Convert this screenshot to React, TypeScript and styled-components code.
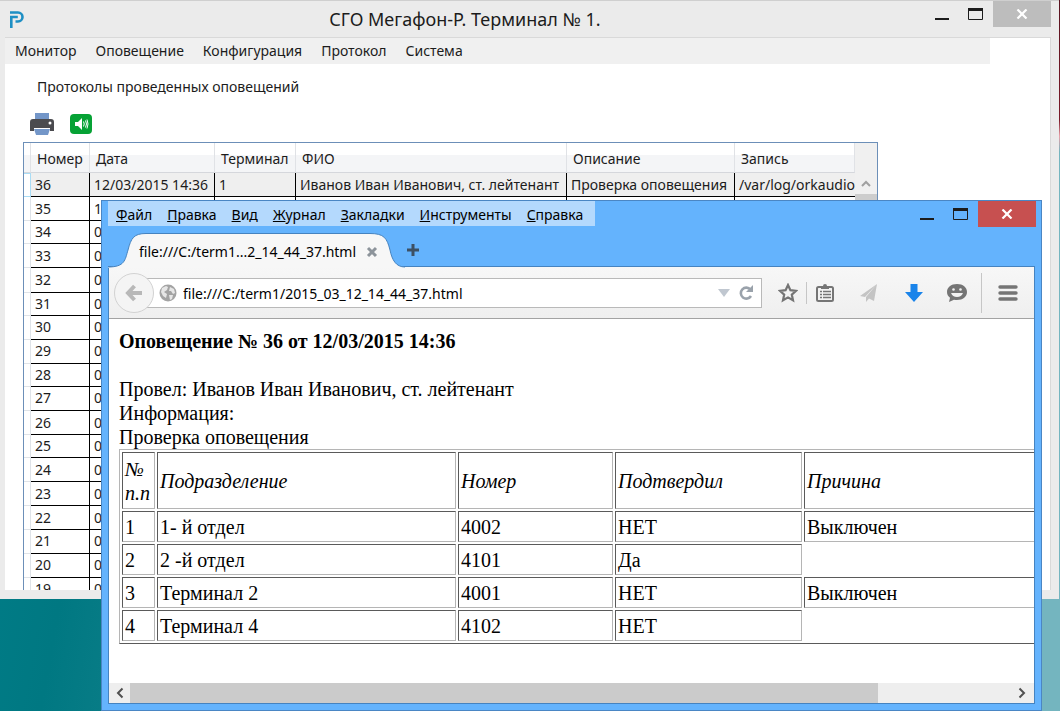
import React from 'react';
import styled, { createGlobalStyle, css } from 'styled-components';

const GlobalStyle = createGlobalStyle`
  * { box-sizing: border-box; }
  html, body, #root { height: 100%; margin: 0; }
  body { overflow: hidden; }
  button { border: 0; padding: 0; margin: 0; background: none; font: inherit; color: inherit; }
`;

const uiFont = '"Noto Sans", "Open Sans", sans-serif';

const Desktop = styled.main`
  position: relative;
  height: 100vh;
  overflow: hidden;
  font-family: ${uiFont};
  color: #1c1c1c;
  background:
    linear-gradient(#5a1420 0, #7a1a28 120px, #e8a0a8 136px, rgba(116, 181, 191, 0) 152px) right top / 6px 152px no-repeat,
    linear-gradient(100deg, #00808b 0, #007882 14%, #74b5bf 92%, #74b5bf 100%);
`;

/* Window chrome */

const AppWindow = styled.section`
  position: absolute;
  top: 0;
  left: 0;
  right: 1px;
  height: 599px;
  display: flex;
  flex-direction: column;
  padding: 0 8px 9px 5px;
  background: #ebebeb;
  border-top: 1px solid #cfcfcf;
`;

const BrowserWindow = styled.section`
  position: absolute;
  top: 200px;
  left: 101px;
  right: 18px;
  bottom: 0;
  display: flex;
  flex-direction: column;
  padding: 0 6px;
  padding-bottom: 6px;
  background: #64b3fd;
  border: 1px solid #4a86c4;
`;

const TitleBar = styled.header`
  display: flex;
  align-items: flex-start;
  height: 36px;
  flex: none;
`;

const AppIcon = styled.svg`
  width: 16px;
  height: 20px;
  margin: 9px 0 0 4px;
  flex: none;
`;

const Title = styled.h1`
  flex: 1;
  margin: 0;
  padding-right: 20px;
  text-align: center;
  font-size: 18px;
  font-weight: 400;
  line-height: 36px;
`;

const WindowControls = styled.div`
  display: flex;
  margin-left: auto;
  flex: none;
`;

const ControlButton = styled.button<{ $close?: string }>`
  width: ${(p) => (p.$close ? 58 : 34)}px;
  height: 26px;
  background: ${(p) => p.$close || 'transparent'};
  svg { display: block; margin: auto; }
`;

function Controls({ close }: { close: string }) {
  return (
    <WindowControls>
      <ControlButton aria-label="Свернуть">
        <svg width="16" height="14"><path d="M1 12h14" stroke="#1c1c1c" strokeWidth="2" /></svg>
      </ControlButton>
      <ControlButton aria-label="Развернуть">
        <svg width="16" height="14"><path d="M.5 1.5h14v11H.5z" fill="none" stroke="#1c1c1c" /><path d="M0 2.500h15" stroke="#1c1c1c" strokeWidth="3" /></svg>
      </ControlButton>
      <ControlButton aria-label="Закрыть" $close={close}>
        <svg width="12" height="10"><path d="M1.5 0.5l9 9M10.500 .5l-9 9" stroke="#fff" strokeWidth="2.200" /></svg>
      </ControlButton>
    </WindowControls>
  );
}

/* Terminal application */

const Client = styled.div`
  flex: 1;
  min-height: 0;
  overflow: hidden;
  background: #fff;
  border: solid #d9d9d9;
  border-width: 1px 1px 0 0;
`;

const MainMenu = styled.nav`
  display: flex;
  gap: 19px;
  height: 26px;
  margin-right: 60px;
  padding-left: 10px;
  background: #f0f0f0;
  font-size: 14px;
  line-height: 24px;
`;

const PageTitle = styled.h2`
  margin: 13px 0 0 32px;
  font-size: 14px;
  font-weight: 400;
  line-height: 20px;
`;

const ActionBar = styled.div`
  display: flex;
  align-items: center;
  gap: 14px;
  height: 24px;
  margin: 15px 0 6px 24px;
  svg { display: block; }
`;

const GridBox = styled.div`
  display: flex;
  width: 855px;
  height: 460px;
  margin-left: 18px;
  overflow: hidden;
  border: 1px solid #6c8fb8;
`;

const ProtocolTable = styled.table`
  width: 831px;
  flex: none;
  table-layout: fixed;
  border-collapse: separate;
  border-spacing: 0;
  font-size: 14px;
  line-height: 20px;
`;

const HeadCell = styled.th`
  height: 30px;
  padding: 2px 0 0 6px;
  overflow: hidden;
  white-space: nowrap;
  text-align: left;
  font-weight: 400;
  background: linear-gradient(#fff 40%, #f4f5f7 42%, #f4f5f7);
  border-right: 1px solid #e0e2e6;
  border-bottom: 1px solid #d5d7dc;
`;

const ProtocolRow = styled.tr<{ $selected?: boolean }>`
  height: 24px;
  background: ${(p) => (p.$selected ? '#efefef' : '#fff')};
  &:nth-child(3n) { height: 23px; }
`;

const ProtocolCell = styled.td`
  padding: 0 0 0 4px;
  overflow: hidden;
  white-space: nowrap;
  border-right: 1px solid #000;
  border-bottom: 1px solid #000;
  line-height: 20px;
  &:last-child { border-right: 0; }
`;

const RowMarker = styled.td<{ $selected?: boolean }>`
  padding: 0;
  background: #fff;
  border: 1px solid ${(p) => (p.$selected ? '#a9dcf5' : '#dfe3e8')};
  border-top-width: ${(p) => (p.$selected ? 1 : 0)}px;
  border-left: 0;
`;

const VerticalScroll = styled.div`
  flex: 1;
  padding-top: 31px;
  background: #f0f0f0;
`;

const ScrollUp = styled.button`
  display: block;
  width: 100%;
  height: 20px;
  svg { display: block; margin: auto; }
`;

const VerticalThumb = styled.div`
  height: 200px;
  background: #cdcdcd;
`;

/* Browser */

const BrowserTop = styled.div`
  display: flex;
  height: 32px;
  margin-right: -1px;
  flex: none;
`;

const BrowserMenu = styled.nav`
  display: flex;
  gap: 15px;
  height: 25px;
  padding: 0 12px 0 8px;
  background: #b4d9fd;
  color: #000;
  font-size: 14px;
  line-height: 27px;
`;

const AccessKey = styled.span`
  text-decoration: underline;
`;

const TabStrip = styled.div`
  display: flex;
  height: 34px;
  flex: none;
  border-bottom: 1px solid #4583c0;
`;

const Tab = styled.div`
  position: relative;
  display: flex;
  align-items: center;
  justify-content: space-between;
  width: 297px;
  height: 35px;
  padding: 2px 27px 0 31px;
  color: #000;
  font-size: 14px;
`;

const TabShape = styled.svg`
  position: absolute;
  left: 0;
  top: 0;
`;

const TabTitle = styled.span`
  position: relative;
  white-space: nowrap;
`;

const IconButton = styled.button<{ $width?: number }>`
  position: relative;
  display: flex;
  align-items: center;
  justify-content: center;
  flex: none;
  width: ${(p) => p.$width || 16}px;
`;

const BrowserBody = styled.div`
  flex: 1;
  min-height: 0;
  display: flex;
  flex-direction: column;
  background: #fff;
  border: solid #4583c0;
  border-width: 0 1px 1px;
`;

const NavBar = styled.div`
  display: flex;
  align-items: center;
  height: 52px;
  flex: none;
  padding-left: 5px;
  background: linear-gradient(#f7f7f7, #efefef);
  border-bottom: 1px solid #a3a3a3;
`;

const BackButton = styled(IconButton)`
  width: 40px;
  height: 40px;
  border: 1px solid #d2d2d2;
  border-radius: 50%;
  background: #f4f4f4;
`;

const AddressBar = styled.div`
  display: flex;
  align-items: center;
  flex: 1;
  height: 30px;
  margin-left: -8px;
  padding: 0 7px 0 13px;
  gap: 6px;
  background: #fff;
  border: 1px solid #b9b9b9;
  border-left: 0;
`;

const AddressInput = styled.input`
  flex: 1;
  min-width: 0;
  height: 28px;
  padding: 2px 0 0;
  border: 0;
  outline: 0;
  background: transparent;
  color: #000;
  font: 14px ${uiFont};
`;

const Tools = styled.div`
  display: flex;
  align-items: center;
  padding-left: 8px;
`;

const Divider = styled.i<{ $height: number }>`
  width: 1px;
  height: ${(p) => p.$height}px;
  background: #c6c6c6;
`;

const Document = styled.article`
  flex: 1;
  min-height: 0;
  overflow: hidden;
  padding: 10px 0 0 10px;
  color: #000;
  font: 20px/24px "Liberation Serif", serif;
`;

const DocHeading = styled.h1`
  margin: 0 0 24px;
  font-size: 20px;
  line-height: 24px;
`;

const DocLine = styled.p`
  margin: 0;
`;

const ReportTable = styled.table`
  width: 1238px;
  table-layout: fixed;
  border-collapse: separate;
  border-spacing: 2px;
  border: 1px solid;
  border-color: #b5b5b5 #5a5a5a #5a5a5a #b5b5b5;
`;

const reportCell = css`
  padding: 0 2px;
  border: 1px solid;
  border-color: #5a5a5a #b5b5b5 #b5b5b5 #5a5a5a;
  text-align: left;
`;

const ReportHead = styled.th`
  ${reportCell}
  height: 57px;
  font-weight: 400;
  font-style: italic;
`;

const ReportCell = styled.td`
  ${reportCell}
  height: 31px;
`;

const HorizontalScroll = styled.div`
  display: flex;
  height: 20px;
  flex: none;
  background: #eee;
`;

const HorizontalTrack = styled.div`
  flex: 1;
  div { width: 85%; height: 100%; background: #cbcbcb; }
`;

const protocols = Array.from({ length: 18 }, (_, i) => 36 - i);
const protocolColumns = ['Номер', 'Дата', 'Терминал', 'ФИО', 'Описание', 'Запись'];
const selectedRecord = ['12/03/2015 14:36', '1', 'Иванов Иван Иванович, ст. лейтенант', 'Проверка оповещения', '/var/log/orkaudio'];
const browserMenu = ['Файл', 'Правка', 'Вид', 'Журнал', 'Закладки', 'Инструменты', 'Справка'];
const report = [
  ['1', '1- й отдел', '4002', 'НЕТ', 'Выключен'],
  ['2', '2 -й отдел', '4101', 'Да'],
  ['3', 'Терминал 2', '4001', 'НЕТ', 'Выключен'],
  ['4', 'Терминал 4', '4102', 'НЕТ'],
];

function TerminalApp() {
  return (
    <AppWindow>
      <TitleBar>
        <AppIcon viewBox="0 0 16 20">
          <path d="M1 2.500h8a4.500 4.500 0 0 1 0 9H6.500" fill="none" stroke="#1e8fc4" strokeWidth="2.600" />
          <path d="M2.300 18V7h6.500" fill="none" stroke="#1e8fc4" strokeWidth="2.600" />
        </AppIcon>
        <Title>СГО Мегафон-Р. Терминал № 1.</Title>
        <Controls close="#bdbdbd" />
      </TitleBar>
      <Client>
        <MainMenu>
          {['Монитор', 'Оповещение', 'Конфигурация', 'Протокол', 'Система'].map((m) => (
            <button key={m}>{m}</button>
          ))}
        </MainMenu>
        <PageTitle>Протоколы проведенных оповещений</PageTitle>
        <ActionBar>
          <button aria-label="Печать">
            <svg width="27" height="24">
              <path d="M6 1h14v6H6z" fill="#7396c8" />
              <path d="M4 7h18a3 3 0 0 1 3 3v9h-4v-3H5v3H1v-9a3 3 0 0 1 3-3z" fill="#4b4b4f" />
              <path d="M5 17h16l-2 6H7z" fill="#7396c8" />
              <circle cx="21" cy="11" r="1.500" fill="#fff" />
            </svg>
          </button>
          <button aria-label="Прослушать">
            <svg width="22" height="22">
              <rect y="1" width="22" height="20" rx="4" fill="#06a235" />
              <path d="M5 9h3l4-4v12l-4-4H5z" fill="#fff" />
              <path d="M13.500 8.500q1.500 2.500 0 5M15.500 7.500q2 3.500 0 7M17 6.500q2 4.500 0 9" fill="none" stroke="#fff" />
            </svg>
          </button>
        </ActionBar>
        <GridBox>
          <ProtocolTable>
            <colgroup>
              {[7, 59, 125, 81, 271, 168, 120].map((w, i) => <col key={i} width={w} />)}
            </colgroup>
            <thead>
              <tr>
                <HeadCell aria-label="Строка" />
                {protocolColumns.map((c) => <HeadCell key={c}>{c}</HeadCell>)}
              </tr>
            </thead>
            <tbody>
              {protocols.map((n) => {
                const selected = n === 36;
                const values = selected ? selectedRecord : [n === 35 ? '1' : '0', '', '', '', ''];
                return (
                  <ProtocolRow key={n} $selected={selected}>
                    <RowMarker $selected={selected} />
                    <ProtocolCell>{n}</ProtocolCell>
                    {values.map((v, i) => <ProtocolCell key={i}>{v}</ProtocolCell>)}
                  </ProtocolRow>
                );
              })}
            </tbody>
          </ProtocolTable>
          <VerticalScroll>
            <ScrollUp aria-label="Вверх">
              <svg width="10" height="8"><path d="M1 6l4-4 4 4" fill="none" stroke="#a0a0a0" strokeWidth="2" /></svg>
            </ScrollUp>
            <VerticalThumb />
          </VerticalScroll>
        </GridBox>
      </Client>
    </AppWindow>
  );
}

function NavigationBar() {
  return (
    <NavBar>
      <BackButton aria-label="Назад">
        <svg width="18" height="18"><path d="M9.500 2L3 9l6.500 7M3.500 9H17" fill="none" stroke="#b8b8b8" strokeWidth="4" /></svg>
      </BackButton>
      <AddressBar>
        <svg width="18" height="18">
          <circle cx="9" cy="9" r="8.500" fill="#a3a3a3" />
          <path d="M3 4l4-2 2 1-1 3-3 2 3 2-1 4-3-2-2-4zM11 3l4 2 1 4-2 1-2-3-2 0zM10 11l4 0-1 4-2 1z" fill="#e6e6e6" />
        </svg>
        <AddressInput aria-label="Адрес" defaultValue="file:///C:/term1/2015_03_12_14_44_37.html" />
        <IconButton aria-label="Журнал адресов">
          <svg width="14" height="10"><path d="M1 1h12L7 9z" fill="#c0c7d0" /></svg>
        </IconButton>
        <IconButton aria-label="Обновить">
          <svg width="16" height="16">
            <path d="M12.500 4.500A5.500 5.500 0 1 0 13 11" fill="none" stroke="#9aa2ab" strokeWidth="2.600" />
            <path d="M15 0v7H8z" fill="#9aa2ab" />
          </svg>
        </IconButton>
      </AddressBar>
      <Tools>
        <IconButton $width={36} aria-label="В закладки">
          <svg width="20" height="20"><path d="M10 2l2.400 5.200 5.600.6-4.200 3.800 1.200 5.700L10 14.400l-5 2.900 1.200-5.700L2 7.800l5.600-.6z" fill="none" stroke="#757575" strokeWidth="2.200" /></svg>
        </IconButton>
        <Divider $height={22} />
        <IconButton $width={36} aria-label="Закладки">
          <svg width="18" height="20">
            <rect x="1" y="4" width="16" height="14" rx="1.500" fill="none" stroke="#757575" strokeWidth="2" />
            <path d="M5 3h2q0-2 2-2t2 2h2v3H5z" fill="#757575" />
            <path d="M4 8.500h2M7 8.500h8M4 11.500h2M7 11.500h8M4 14.500h2M7 14.500h8" stroke="#757575" strokeWidth="1.600" />
          </svg>
        </IconButton>
        <IconButton $width={52} aria-label="Отправить">
          <svg width="20" height="20"><path d="M18 1L1 13l5 1zM18 1L7 14v5l3-3.500 5 2.500z" fill="#c4c4c4" /></svg>
        </IconButton>
        <IconButton $width={38} aria-label="Загрузки">
          <svg width="18" height="20"><path d="M5.500 1h7v8H18l-9 10L0 9h5.500z" fill="#1a84ea" /></svg>
        </IconButton>
        <IconButton $width={48} aria-label="Чат">
          <svg width="22" height="20">
            <path d="M11 1c6 0 10 3.400 10 8s-4 8-10 8c-1 0-2 0-3-.3L3 19l1-4.300C2 13.300 1 11.300 1 9c0-4.600 4-8 10-8z" fill="#757575" />
            <circle cx="7.500" cy="6.500" r="1.300" fill="#f2f2f2" /><circle cx="14.500" cy="6.500" r="1.300" fill="#f2f2f2" />
            <path d="M5 10h12q-1.500 4-6 4T5 10z" fill="#f2f2f2" />
          </svg>
        </IconButton>
        <Divider $height={40} />
        <IconButton $width={52} aria-label="Меню">
          <svg width="20" height="18"><path d="M2 3h16M2 9h16M2 15h16" stroke="#757575" strokeWidth="3.400" strokeLinecap="round" /></svg>
        </IconButton>
      </Tools>
    </NavBar>
  );
}

function Browser() {
  return (
    <BrowserWindow>
      <BrowserTop>
        <BrowserMenu>
          {browserMenu.map((m) => (
            <button key={m}><AccessKey>{m[0]}</AccessKey>{m.slice(1)}</button>
          ))}
        </BrowserMenu>
        <Controls close="#c75050" />
      </BrowserTop>
      <TabStrip>
        <Tab>
          <TabShape width="297" height="35">
            <path d="M0 34C17 34 17 27 20 17C23 5 26 .5 38 .5H262C276 .5 279 5 282 17C284 27 288 34 297 34V35H0z" fill="#f7f7f7" />
            <path d="M0 34C17 34 17 27 20 17C23 5 26 .5 38 .5H262C276 .5 279 5 282 17C284 27 288 34 297 34" fill="none" stroke="#4583c0" />
          </TabShape>
          <TabTitle>file:///C:/term1...2_14_44_37.html</TabTitle>
          <IconButton aria-label="Закрыть вкладку" $width={12}>
            <svg width="12" height="12"><path d="M2 2l8 8M10 2l-8 8" stroke="#8d949b" strokeWidth="3" /></svg>
          </IconButton>
        </Tab>
        <IconButton aria-label="Новая вкладка">
          <svg width="14" height="14"><path d="M7 1v12M1 7h12" stroke="#3c5064" strokeWidth="3" /></svg>
        </IconButton>
      </TabStrip>
      <BrowserBody>
        <NavigationBar />
        <Document>
          <DocHeading>Оповещение № 36 от 12/03/2015 14:36</DocHeading>
          <DocLine>Провел: Иванов Иван Иванович, ст. лейтенант</DocLine>
          <DocLine>Информация:</DocLine>
          <DocLine>Проверка оповещения</DocLine>
          <ReportTable>
            <colgroup>
              {[33, 299, 155, 187, 550].map((w) => <col key={w} width={w} />)}
            </colgroup>
            <thead>
              <tr>
                <ReportHead>№ п.п</ReportHead>
                <ReportHead>Подразделение</ReportHead>
                <ReportHead>Номер</ReportHead>
                <ReportHead>Подтвердил</ReportHead>
                <ReportHead>Причина</ReportHead>
              </tr>
            </thead>
            <tbody>
              {report.map((r) => (
                <tr key={r[0]}>{r.map((v, i) => <ReportCell key={i}>{v}</ReportCell>)}</tr>
              ))}
            </tbody>
          </ReportTable>
        </Document>
        <HorizontalScroll>
          <IconButton $width={21} aria-label="Влево">
            <svg width="10" height="12"><path d="M7.500 1.500L3 6l4.500 4.500" fill="none" stroke="#505050" strokeWidth="2" /></svg>
          </IconButton>
          <HorizontalTrack><div /></HorizontalTrack>
          <IconButton $width={24} aria-label="Вправо">
            <svg width="10" height="12"><path d="M2.500 1.500L7 6l-4.500 4.500" fill="none" stroke="#505050" strokeWidth="2" /></svg>
          </IconButton>
        </HorizontalScroll>
      </BrowserBody>
    </BrowserWindow>
  );
}

export default function App() {
  return (
    <Desktop>
      <GlobalStyle />
      <TerminalApp />
      <Browser />
    </Desktop>
  );
}
